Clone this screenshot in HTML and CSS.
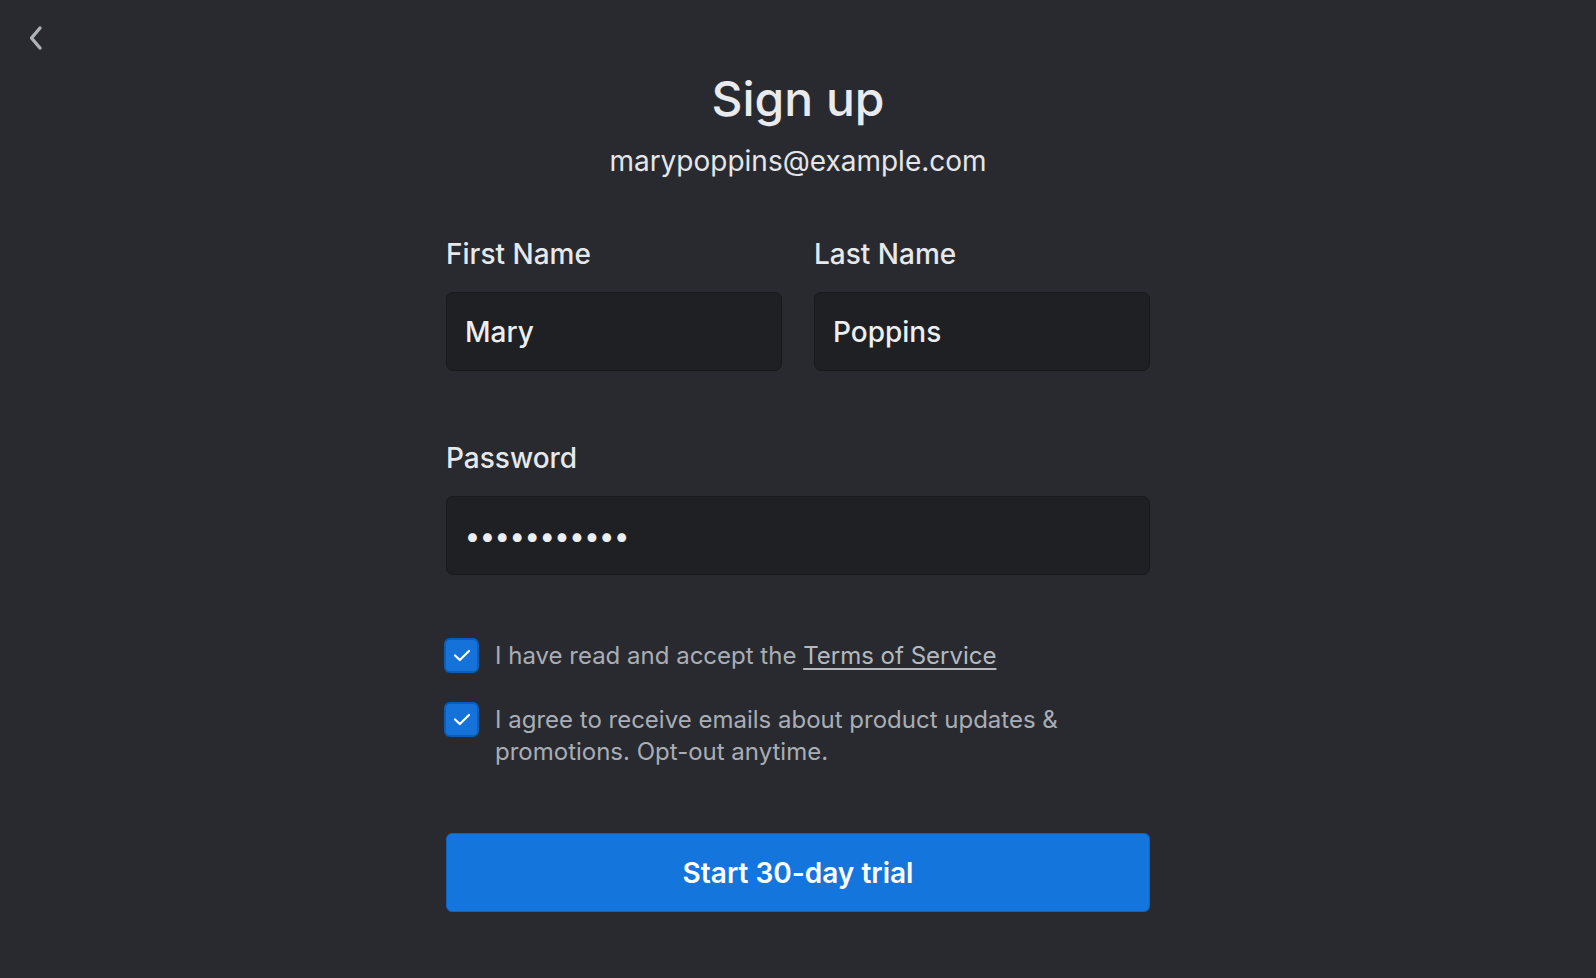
FILE: index.html
```html
<!DOCTYPE html>
<html lang="en">
<head>
<meta charset="utf-8">
<title>Sign up</title>
<link rel="stylesheet" href="styles.css">
</head>
<body>
<div class="topbar">
  <button class="back" aria-label="Back">
    <svg width="24" height="28" viewBox="0 0 24 28"><path d="M13 4 L4.5 14 L13 24" fill="none" stroke="#aeb3ba" stroke-width="3.4" stroke-linecap="round" stroke-linejoin="round"/></svg>
  </button>
</div>
<main class="form">
  <h1 class="title">Sign up</h1>
  <div class="email">marypoppins@example.com</div>

  <div class="row names">
    <div class="field">
      <div class="label">First Name</div>
      <div class="input">Mary</div>
    </div>
    <div class="field">
      <div class="label">Last Name</div>
      <div class="input">Poppins</div>
    </div>
  </div>

  <div class="field password">
    <div class="label">Password</div>
    <div class="input dots">•••••••••••</div>
  </div>

  <div class="checks">
    <div class="check">
      <span class="box"><svg width="18" height="13" viewBox="0 0 18 13"><path d="M2 6.5 L6.8 11 L16 2" fill="none" stroke="#fff" stroke-width="2.2" stroke-linecap="round" stroke-linejoin="round"/></svg></span>
      <span class="check-text">I have read and accept the <a class="link" href="#">Terms of Service</a></span>
    </div>
    <div class="check">
      <span class="box"><svg width="18" height="13" viewBox="0 0 18 13"><path d="M2 6.5 L6.8 11 L16 2" fill="none" stroke="#fff" stroke-width="2.2" stroke-linecap="round" stroke-linejoin="round"/></svg></span>
      <span class="check-text">I agree to receive emails about product updates &amp;<br>promotions. Opt-out anytime.</span>
    </div>
  </div>

  <button class="cta">Start 30-day trial</button>
</main>
</body>
</html>
```
FILE: styles.css
```css
* { box-sizing: border-box; }
html, body { margin: 0; padding: 0; }
body {
  background: #292a2f;
  font-family: Inter, "Noto Sans", sans-serif;
  color: #e7e9ec;
  height: 978px;
  overflow: hidden;
  position: relative;
}
.topbar {
  position: absolute;
  left: 0;
  top: 0;
}
.back {
  display: block;
  margin: 24px 0 0 27px;
  padding: 0;
  background: none;
  border: 0;
  width: 24px;
  height: 28px;
}
.back svg { display: block; }
.form {
  width: 704px;
  margin: 0 auto;
  padding-top: 70px;
  display: flex;
  flex-direction: column;
}
.title {
  margin: 0;
  font-size: 48px;
  line-height: 58px;
  font-weight: 500;
  text-align: center;
  color: #e8eaed;
}
.email {
  margin-top: 16px;
  font-size: 28px;
  line-height: 34px;
  font-weight: 400;
  text-align: center;
  color: #e4e6ea;
}
.row { display: flex; gap: 32px; }
.names { margin-top: 59px; }
.field { flex: 1; display: flex; flex-direction: column; }
.label {
  font-size: 28px;
  line-height: 34px;
  font-weight: 500;
  color: #e6e8eb;
}
.input {
  margin-top: 21px;
  height: 79px;
  background: #1f2024;
  border: 1.5px solid #19191c;
  border-radius: 7px;
  padding: 0 18px;
  display: flex;
  align-items: center;
  font-size: 28px;
  font-weight: 500;
  color: #eceef1;
}
.password { margin-top: 70px; }
.dots {
  letter-spacing: 0;
  font-size: 28px;
}
.checks {
  margin-top: 63px;
  margin-left: -2px;
  display: flex;
  flex-direction: column;
  gap: 29px;
}
.check {
  display: flex;
  align-items: flex-start;
  gap: 16px;
}
.box {
  flex: none;
  width: 35px;
  height: 35px;
  border-radius: 6px;
  background: #1572d9;
  border: 2px solid #0f5cb3;
  display: flex;
  align-items: center;
  justify-content: center;
}
.box svg { display: block; }
.check-text {
  margin-top: 2px;
  font-size: 24px;
  line-height: 32px;
  color: #a9aeb6;
}
.link {
  color: #b4b9c0;
  text-decoration: underline;
  text-underline-offset: 4px;
  text-decoration-thickness: 2px;
}
.cta {
  margin-top: 65px;
  height: 79px;
  width: 100%;
  background: #1475dc;
  border: 1px solid #0f62bd;
  border-radius: 6px;
  color: #ffffff;
  font-family: Inter, "Noto Sans", sans-serif;
  font-size: 28px;
  font-weight: 600;
  cursor: pointer;
}
```
